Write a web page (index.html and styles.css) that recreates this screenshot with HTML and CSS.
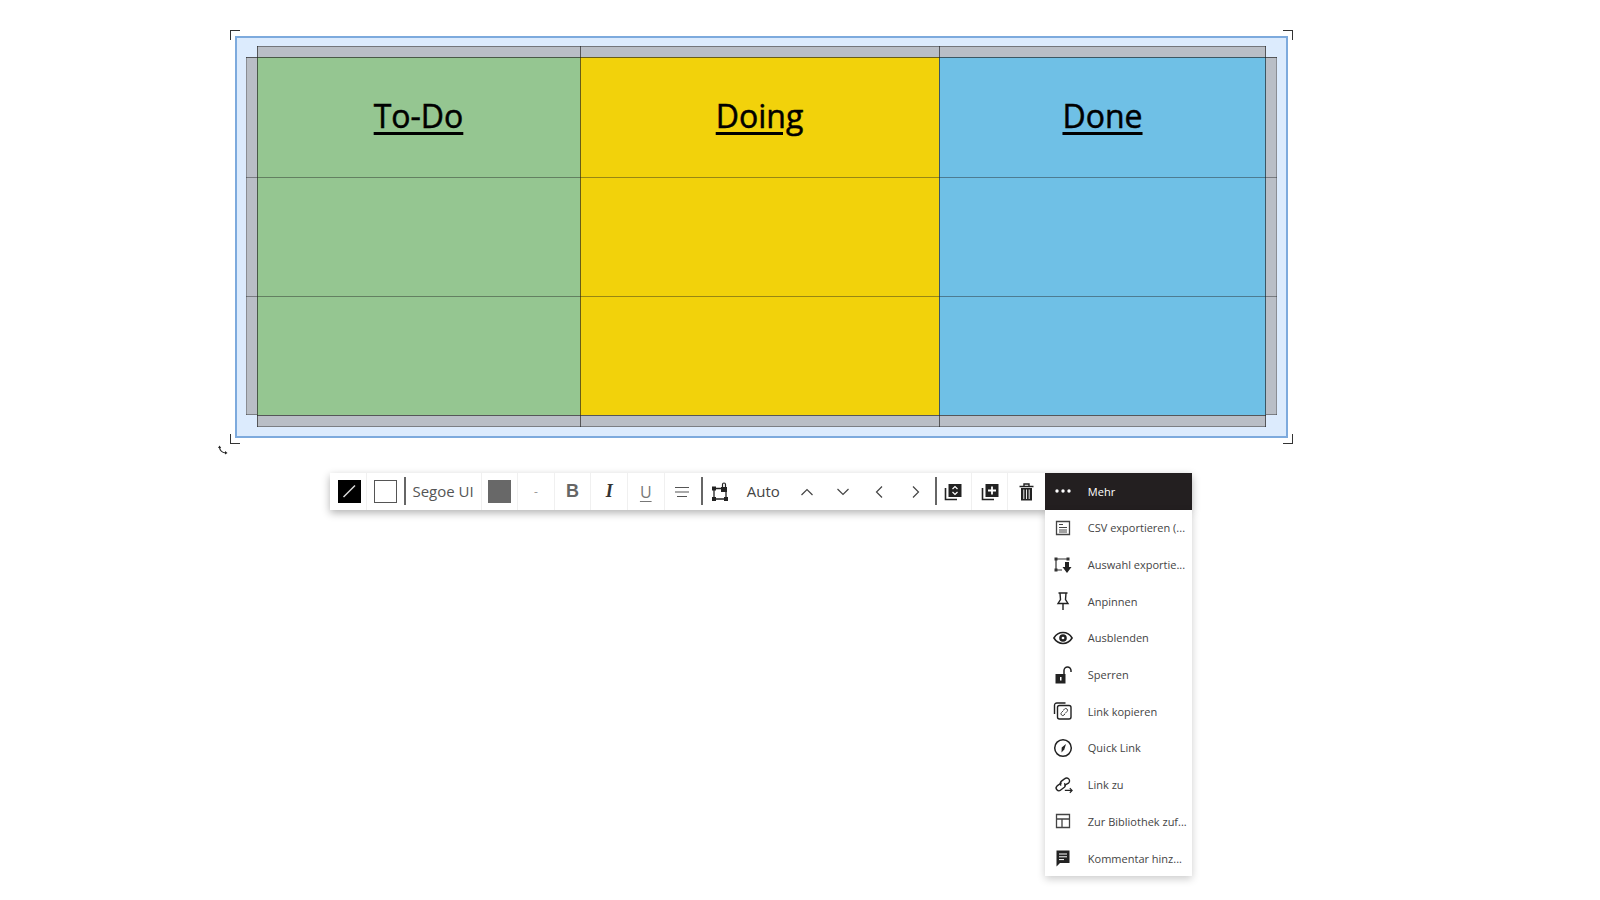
FILE: index.html
```html
<!DOCTYPE html>
<html lang="en">
<head>
    <meta charset="UTF-8">
    <title>Kanban table</title>
    <link rel="stylesheet" href="styles.css">
</head>
<body>
    <div class="selection">
        <span class="corner top-left"></span>
        <span class="corner top-right"></span>
        <span class="corner bottom-left"></span>
        <span class="corner bottom-right"></span>
        <svg class="rotate" width="10" height="10" viewBox="0 0 10 10"><path d="M1.5 2.5 C2 5.5 4 7.5 7.5 8" fill="none" stroke="#222" stroke-width="1.2"/><path d="M0 3 L1.5 0.5 L3.2 3 Z M7 6 L9.5 8 L7 9.6 Z" fill="#222"/></svg>

        <div class="table">
            <div></div>
            <div class="strip edge-top col"></div>
            <div class="strip edge-top col"></div>
            <div class="strip edge-top col col-end"></div>
            <div></div>

            <div class="strip edge-left row"></div>
            <div class="cell green col row"><h1>To-Do</h1></div>
            <div class="cell yellow col row"><h1>Doing</h1></div>
            <div class="cell blue col col-end row"><h1>Done</h1></div>
            <div class="strip edge-right row"></div>

            <div class="strip edge-left soft"></div>
            <div class="cell green col soft"></div>
            <div class="cell yellow col soft"></div>
            <div class="cell blue col col-end soft"></div>
            <div class="strip edge-right soft"></div>

            <div class="strip edge-left edge-bottom soft"></div>
            <div class="cell green col soft"></div>
            <div class="cell yellow col soft"></div>
            <div class="cell blue col col-end soft"></div>
            <div class="strip edge-right edge-bottom soft"></div>

            <div></div>
            <div class="strip edge-bottom col row"></div>
            <div class="strip edge-bottom col row"></div>
            <div class="strip edge-bottom col col-end row"></div>
            <div></div>
        </div>
    </div>

    <div class="toolbar">
        <div class="tool first"><svg class="swatch" width="23" height="23" viewBox="0 0 23 23"><rect width="23" height="23" fill="#000"/><path d="M5.5 17 L17 5.5" stroke="#ddd" stroke-width="1.4"/></svg></div>
        <div class="tool plain"><span class="box"></span></div>
        <div class="divider"></div>
        <div class="tool font">Segoe UI</div>
        <div class="tool"><span class="fill"></span></div>
        <div class="tool dash">-</div>
        <div class="tool bold">B</div>
        <div class="tool italic">I</div>
        <div class="tool under">U</div>
        <div class="tool plain"><svg width="16" height="12" viewBox="0 0 16 12"><path d="M1 1.5 H15 M1 6 H15 M3 10.5 H13" stroke="#555" stroke-width="1.2"/></svg></div>
        <div class="divider"></div>
        <div class="tool plain"><svg class="nudge-left" width="18" height="20" viewBox="0 0 18 20"><path d="M3 6.5 H15 V17 H3 Z" fill="none" stroke="#222" stroke-width="1.3"/><path d="M1 4.5 H5 V8.5 H1 Z M13 15 H17 V19 H13 Z M1 15 H5 V19 H1 Z" fill="#222"/><path d="M10 5 H16 V10 H10 Z" fill="#222"/><path d="M11.5 5 V2.5 A1.5 1.5 0 0 1 14.5 2.5 V5" fill="none" stroke="#222" stroke-width="1.2"/></svg></div>
        <div class="tool plain auto">Auto</div>
        <div class="tool plain"><svg width="14" height="8" viewBox="0 0 14 8"><path d="M1.5 7 L7 1.5 L12.5 7" fill="none" stroke="#444" stroke-width="1.2"/></svg></div>
        <div class="tool plain"><svg width="14" height="8" viewBox="0 0 14 8"><path d="M1.5 1 L7 6.5 L12.5 1" fill="none" stroke="#444" stroke-width="1.2"/></svg></div>
        <div class="tool plain"><svg class="nudge-left" width="8" height="14" viewBox="0 0 8 14"><path d="M7 1.5 L1.5 7 L7 12.5" fill="none" stroke="#444" stroke-width="1.2"/></svg></div>
        <div class="tool plain wide"><svg width="8" height="14" viewBox="0 0 8 14"><path d="M1 1.5 L6.5 7 L1 12.5" fill="none" stroke="#444" stroke-width="1.2"/></svg></div>
        <div class="divider"></div>
        <div class="tool after-divider"><svg class="nudge-left" width="18" height="18" viewBox="0 0 18 18"><path d="M1.5 5 V16.5 H13" fill="none" stroke="#222" stroke-width="1.6"/><path d="M4.5 1 H17.5 V14 H4.5 Z" fill="#222"/><path d="M8.5 6 L11 3.5 L13.5 6 M8.5 9 L11 11.5 L13.5 9" fill="none" stroke="#fff" stroke-width="1.2"/></svg></div>
        <div class="tool"><svg class="nudge-right" width="18" height="18" viewBox="0 0 18 18"><path d="M1.5 5 V16.5 H13" fill="none" stroke="#222" stroke-width="1.6"/><path d="M4.5 1 H17.5 V14 H4.5 Z" fill="#222"/><path d="M11 3.5 V11.5 M7 7.5 H15" stroke="#fff" stroke-width="1.8"/></svg></div>
        <div class="tool plain"><svg width="15" height="18" viewBox="0 0 15 18"><path d="M0.5 3.5 H14.5 M5 3 V1 H10 V3" fill="none" stroke="#222" stroke-width="1.4"/><path d="M2 5 H13 V17.5 H2 Z" fill="#222"/><path d="M4.8 6.5 V16 M7.5 6.5 V16 M10.2 6.5 V16" stroke="#fff" stroke-width="0.9"/></svg></div>

        <div class="more">
            <div class="more-button">
                <svg class="menu-icon" width="20" height="20" viewBox="0 0 20 20"><circle cx="4" cy="10" r="1.7" fill="#fff"/><circle cx="10" cy="10" r="1.7" fill="#fff"/><circle cx="16" cy="10" r="1.7" fill="#fff"/></svg>
                <span>Mehr</span>
            </div>
            <ul class="menu">
                <li><svg class="menu-icon" width="20" height="20" viewBox="0 0 20 20"><path d="M3.5 3.5 H16.5 V16.5 H3.5 Z" fill="none" stroke="#444" stroke-width="1.3"/><path d="M6 6.5 H10 M6 9.5 H14 M6 12 H14 M6 14 H14" stroke="#444"/></svg>CSV exportieren (...</li>
                <li><svg class="menu-icon" width="20" height="20" viewBox="0 0 20 20"><path d="M3 4 H15 M3 15 H9 M3 4 V15" fill="none" stroke="#333" stroke-width="1.2"/><path d="M1.5 2.5 H4.5 V5.5 H1.5 Z M1.5 13.5 H4.5 V16.5 H1.5 Z M13.5 2.5 H16.5 V5.5 H13.5 Z" fill="#333"/><path d="M12 7 H16 V12 H18.5 L14 18 L9.5 12 H12 Z" fill="#222"/></svg>Auswahl exportie...</li>
                <li><svg class="menu-icon" width="20" height="20" viewBox="0 0 20 20"><path d="M5.5 2 H14.5 M7 2 L7.5 8.5 L5 12.5 H15 L12.5 8.5 L13 2" fill="none" stroke="#222" stroke-width="1.4"/><path d="M10 12.5 V19" stroke="#222" stroke-width="1.4"/></svg>Anpinnen</li>
                <li><svg class="menu-icon" width="20" height="20" viewBox="-1 0 22 20"><path d="M0 10 C3 5 6.5 4 10 4 C13.5 4 17 5 20 10 C17 15 13.5 16 10 16 C6.5 16 3 15 0 10 Z" fill="none" stroke="#222" stroke-width="1.7"/><circle cx="10" cy="10" r="4.2" fill="#222"/><circle cx="10" cy="10" r="1.5" fill="#fff"/></svg>Ausblenden</li>
                <li><svg class="menu-icon" width="20" height="20" viewBox="0 0 20 20"><path d="M2.5 9 H12.5 V18.5 H2.5 Z" fill="#222"/><path d="M7 12 H8.5 V15.5 H7 Z" fill="#fff"/><path d="M11 9 V5.5 A3.5 3.5 0 0 1 18 5.5 V7" fill="none" stroke="#222" stroke-width="1.5"/></svg>Sperren</li>
                <li><svg class="menu-icon" width="20" height="20" viewBox="0 0 20 20"><path d="M12.5 2 H4 Q1.5 2 1.5 4.5 V13" fill="none" stroke="#222" stroke-width="1.4"/><rect x="4.5" y="4.5" width="13.5" height="13.5" rx="2" fill="#fff" stroke="#222" stroke-width="1.4"/><path d="M10.5 9.5 L8.5 11.5 A1.7 1.7 0 0 0 11 14 L12 13 M12 12.5 L14 10.5 A1.7 1.7 0 0 0 11.5 8 L10.5 9" fill="none" stroke="#444"/></svg>Link kopieren</li>
                <li><svg class="menu-icon" width="20" height="20" viewBox="0 0 20 20"><circle cx="10" cy="10" r="8.3" fill="none" stroke="#222" stroke-width="1.5"/><path d="M13 6 L11.3 11.5 L8.5 14.5 L8.7 9.5 Z" fill="#222"/></svg>Quick Link</li>
                <li><svg class="menu-icon" width="20" height="20" viewBox="0 0 22 20"><path d="M9.5 7.5 L4.5 11 A3 3 0 0 0 8.5 15.5 L12.5 12.5 A3 3 0 0 0 12.5 8" fill="none" stroke="#222" stroke-width="1.5"/><path d="M12.5 10.5 L17 8 A3 3 0 0 0 13 3 L9 6 A3 3 0 0 0 9 10.5" fill="none" stroke="#222" stroke-width="1.5"/><path d="M13 16 H21 M18.5 13.5 L21 16 L18.5 18.5" fill="none" stroke="#222" stroke-width="1.3"/></svg>Link zu</li>
                <li><svg class="menu-icon" width="20" height="20" viewBox="0 0 20 20"><path d="M3.5 3.5 H16.5 V16.5 H3.5 Z M3.5 8 H16.5 M9 8 V16.5" fill="none" stroke="#444" stroke-width="1.3"/></svg>Zur Bibliothek zuf...</li>
                <li><svg class="menu-icon" width="20" height="20" viewBox="0 0 20 20"><path d="M3.5 2.5 H16.5 V15 H7 L3.5 18.5 Z" fill="#222"/><path d="M6 6 H14 M6 8.8 H14 M6 11.6 H11" stroke="#fff" stroke-width="1"/></svg>Kommentar hinz...</li>
            </ul>
        </div>
    </div>
</body>
</html>
```

FILE: styles.css
```css
body {
    box-sizing: border-box;
    min-height: 900px;
    margin: 0;
    padding: 36px 0 0 235px;
    background-color: #fff;
    font-family: "Open Sans", "Noto Sans", sans-serif;
}

/* selected table */
.selection {
    position: relative;
    width: fit-content;
    padding: 8px 9px 9px 9px;
    background-color: #dcebfd;
    border: 2px solid #7daadd;
}
.corner {
    position: absolute;
    width: 9px;
    height: 9px;
    border: 0 solid #333;
}
.top-left {
    top: -8px;
    left: -7px;
    border-width: 1px 0 0 1px;
}
.top-right {
    top: -8px;
    right: -7px;
    border-width: 1px 1px 0 0;
}
.bottom-left {
    bottom: -8px;
    left: -7px;
    border-width: 0 0 1px 1px;
}
.bottom-right {
    bottom: -8px;
    right: -7px;
    border-width: 0 1px 1px 0;
}
.rotate {
    position: absolute;
    left: -19px;
    bottom: -19px;
}

.table {
    display: grid;
    grid-template-columns: 11px 323px 359px 327px 11px;
    grid-template-rows: 11px 119.5px 119.5px 119px 12px;
}
.table > div {
    box-shadow:
        inset 1px 0 0 var(--left, transparent),
        inset -1px 0 0 var(--right, transparent),
        inset 0 1px 0 var(--top, transparent),
        inset 0 -1px 0 var(--bottom, transparent);
}
.strip {
    background-color: #b9bec6;
}
.cell {
    text-align: center;
}
.green {
    background-color: #95c691;
}
.yellow {
    background-color: #f2d20b;
}
.blue {
    background-color: #6fc0e6;
}
/* grid lines */
.col {
    --left: rgba(30, 30, 30, 0.65);
}
.col-end {
    --right: rgba(30, 30, 30, 0.65);
}
.row {
    --top: rgba(30, 30, 30, 0.65);
}
.soft {
    --top: rgba(30, 30, 30, 0.42);
}
.edge-top {
    --top: rgba(30, 30, 30, 0.45);
}
.edge-bottom {
    --bottom: rgba(30, 30, 30, 0.4);
}
.edge-left {
    --left: rgba(30, 30, 30, 0.3);
}
.edge-right {
    --right: rgba(30, 30, 30, 0.3);
}
h1 {
    margin: 36px 0 0;
    font-size: 32px;
    line-height: 46px;
    font-weight: 400;
    color: #000;
    -webkit-text-stroke: 0.5px #000;
    text-decoration: underline;
    text-decoration-thickness: 2.5px;
    text-underline-offset: 4px;
}

/* toolbar under the table */
.toolbar {
    display: flex;
    width: fit-content;
    height: 37px;
    margin: 35px 0 0 95px;
    background-color: #fff;
    box-shadow: 0 3px 8px rgba(0, 0, 0, 0.3);
}
.tool {
    display: flex;
    align-items: center;
    justify-content: center;
    box-sizing: border-box;
    width: 36.6px;
    color: #555;
    border-right: 1px solid #f0f0f0;
    font-size: 15px;
}
.first {
    width: 37px;
    padding-left: 2px;
}
.plain {
    border-right-color: transparent;
}
.wide {
    width: 36.5px;
}
.after-divider {
    width: 34.6px;
}
.nudge-left {
    margin-right: 2px;
}
.nudge-right {
    margin-left: 2px;
}
.box {
    box-sizing: border-box;
    width: 23px;
    height: 23px;
    margin-left: 1px;
    border: 1.5px solid #555;
}
.fill {
    width: 23px;
    height: 23px;
    margin-left: 1px;
    background-color: #686868;
}
.divider {
    width: 2px;
    height: 28px;
    margin-top: 4px;
    background-color: #666;
}
.font {
    width: 76px;
    padding-bottom: 2px;
    color: #555;
    white-space: nowrap;
}
.dash {
    color: #999;
    font-size: 12px;
}
.bold {
    font-family: "Liberation Sans", sans-serif;
    font-size: 18px;
    font-weight: 700;
    color: #666;
}
.italic {
    font-family: "Liberation Serif", serif;
    font-size: 18px;
    font-style: italic;
    font-weight: 700;
    color: #333;
}
.under {
    text-decoration: underline;
    text-underline-offset: 3px;
    color: #777;
    font-size: 16px;
}
.auto {
    width: 49px;
    padding: 0 1px 2px 0;
    color: #444;
}

/* more menu, hangs under its button */
.more {
    position: relative;
    width: 147px;
}
.more-button {
    display: flex;
    align-items: center;
    height: 37px;
    margin-top: -0.5px;
    background-color: #231f20;
    color: #fff;
    font-size: 11px;
}
.menu-icon {
    flex: none;
    margin: 0 15px 0 8px;
}
.menu {
    position: absolute;
    top: 36.5px;
    left: 0;
    right: 0;
    margin: 0;
    padding: 0;
    list-style-type: none;
    background-color: #fff;
    box-shadow: 0 3px 8px rgba(0, 0, 0, 0.2);
}
.menu li {
    display: flex;
    align-items: center;
    height: 36.7px;
    color: #444;
    font-size: 11px;
    white-space: nowrap;
}
```
